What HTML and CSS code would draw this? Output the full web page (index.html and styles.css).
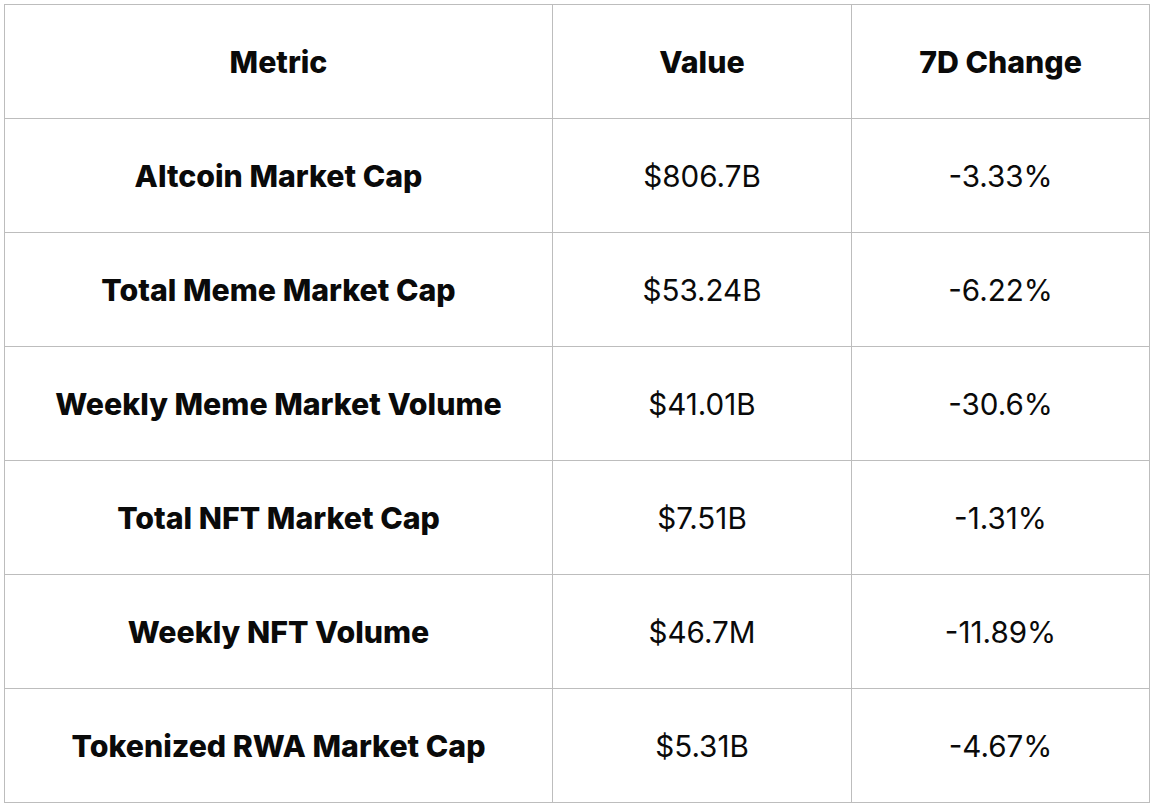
FILE: index.html
```html
<!DOCTYPE html>
<html>
<head>
<meta charset="utf-8">
<link rel="stylesheet" href="styles.css">
</head>
<body>
<table class="metrics">
  <thead>
    <tr><th>Metric</th><th>Value</th><th>7D Change</th></tr>
  </thead>
  <tbody>
    <tr><th>Altcoin Market Cap</th><td>$806.7B</td><td>-3.33%</td></tr>
    <tr><th>Total Meme Market Cap</th><td>$53.24B</td><td>-6.22%</td></tr>
    <tr><th>Weekly Meme Market Volume</th><td>$41.01B</td><td>-30.6%</td></tr>
    <tr><th>Total NFT Market Cap</th><td>$7.51B</td><td>-1.31%</td></tr>
    <tr><th>Weekly NFT Volume</th><td>$46.7M</td><td>-11.89%</td></tr>
    <tr><th>Tokenized RWA Market Cap</th><td>$5.31B</td><td>-4.67%</td></tr>
  </tbody>
</table>
</body>
</html>
```
FILE: styles.css
```css
html, body {
  margin: 0;
  padding: 0;
  background: #ffffff;
}
body {
  padding: 4px 0 0 4px;
  font-family: Inter, "Liberation Sans", sans-serif;
  color: #0a0a0a;
}
.metrics {
  border-collapse: collapse;
  table-layout: fixed;
  width: 1146px;
}
.metrics th,
.metrics td {
  border: 1px solid #bdbdbd;
  height: 113px;
  padding: 0;
  text-align: center;
  vertical-align: middle;
  font-size: 29.6px;
  line-height: 36px;
}
.metrics th {
  font-weight: 800;
  font-size: 30.3px;
}
.metrics td {
  font-weight: 400;
}
.metrics th:nth-child(1) { width: 547px; }
.metrics th:nth-child(2),
.metrics td:nth-child(2) { width: 298px; }
```
